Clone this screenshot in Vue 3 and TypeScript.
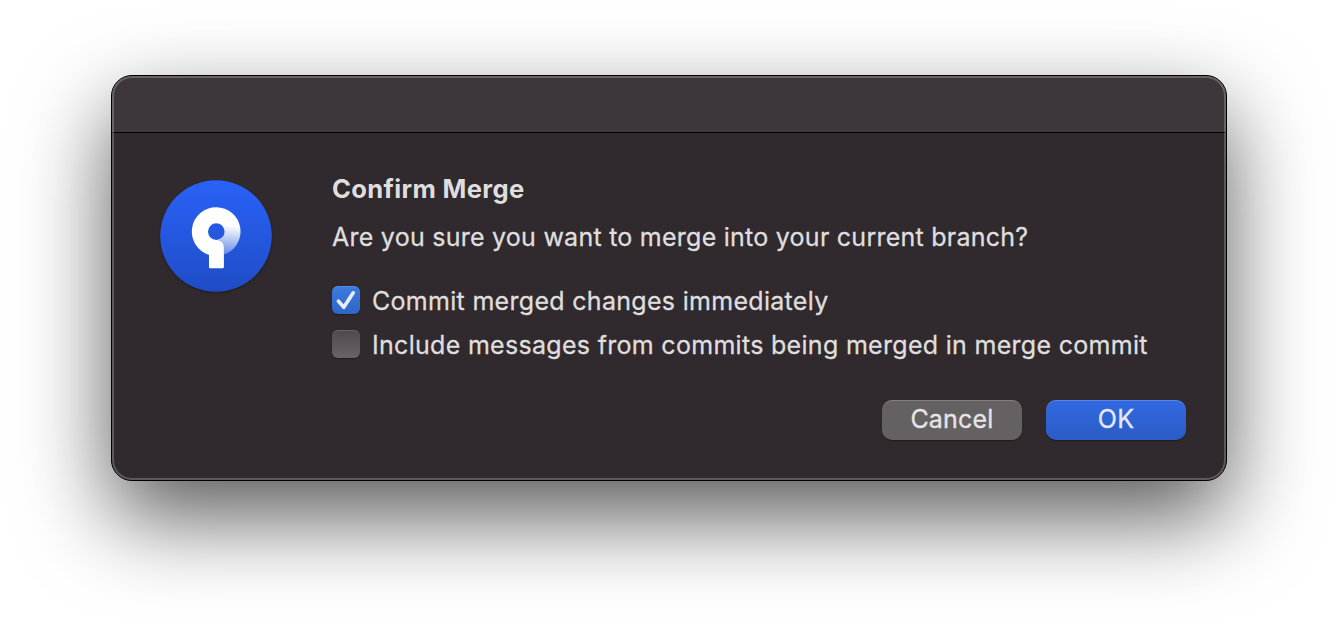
<script setup lang="ts">
import { ref } from 'vue'

interface Option {
  id: string
  label: string
  checked: boolean
}

const options = ref<Option[]>([
  { id: 'commit', label: 'Commit merged changes immediately', checked: true },
  { id: 'include', label: 'Include messages from commits being merged in merge commit', checked: false },
])

function toggle(option: Option): void {
  option.checked = !option.checked
}
</script>

<template>
  <main class="desktop">
    <section class="window" role="dialog" aria-labelledby="dialog-title">
      <header class="titlebar"></header>
      <div class="body">
        <svg class="app-icon" width="120" height="120" viewBox="0 0 120 120" aria-hidden="true">
          <defs>
            <linearGradient id="disc" x1="0" y1="0" x2="0" y2="1">
              <stop offset="0" stop-color="#2962f8" />
              <stop offset="1" stop-color="#204dc6" />
            </linearGradient>
            <linearGradient id="fade" gradientUnits="userSpaceOnUse" x1="72" y1="49" x2="69" y2="79">
              <stop offset="0" stop-color="#fff" />
              <stop offset="1" stop-color="#fff" stop-opacity="0.3" />
            </linearGradient>
          </defs>
          <circle class="disc" cx="60" cy="60" r="55.8" fill="url(#disc)" />
          <path fill="url(#fade)" d="M60 31.2h.3a24.4 24.4 0 0 1 7.4 47.6V71a7 7 0 0 0-7.4-7.2a8.3 8.3 0 0 0 0-16.6H60z" />
          <path fill="#fff" d="M60.3 31.2V47.3a8.3 8.3 0 0 0 0 16.6c4.6 0 7.6 2.7 7.6 7.3V91a1.2 1.2 0 0 1-1.2 1.2H54.2A1.2 1.2 0 0 1 53 91V78.9A24.4 24.4 0 0 1 60.3 31.2z" />
        </svg>
        <div class="content">
          <h1 id="dialog-title">Confirm Merge</h1>
          <p class="question">Are you sure you want to merge into your current branch?</p>
          <div class="options">
            <div
              v-for="option in options"
              :key="option.id"
              class="option"
              role="checkbox"
              :aria-checked="option.checked"
              @click="toggle(option)"
            >
              <span class="box" :class="{ checked: option.checked }">
                <svg v-if="option.checked" width="28" height="28" viewBox="0 0 28 28">
                  <path d="M6.4 15.1l5.4 6.2L21.2 6.8" fill="none" stroke="#e8edfa" stroke-width="3.6" stroke-linecap="round" stroke-linejoin="round" />
                </svg>
              </span>
              <span>{{ option.label }}</span>
            </div>
          </div>
          <footer class="actions">
            <button type="button" class="btn cancel">Cancel</button>
            <button type="button" class="btn ok">OK</button>
          </footer>
        </div>
      </div>
    </section>
  </main>
</template>

<style>
body {
  background: #fff;
  overflow: hidden;
}
</style>

<style scoped>
.desktop {
  box-sizing: border-box;
  width: 1338px;
  height: 628px;
  padding: 75px 111px;
  overflow: hidden;
  background: #fff;
  font-family: Inter, "Liberation Sans", sans-serif;
  color: #dfdedf;
}
.window {
  position: relative;
  box-sizing: border-box;
  width: 1116px;
  height: 406px;
  border: 1px solid #000;
  border-radius: 21px;
  background: #30292d;
  box-shadow: 0 36px 88px rgba(0, 0, 0, 0.65);
}
.window::after {
  content: "";
  position: absolute;
  inset: 0;
  border-radius: 20px;
  box-shadow: inset 0 0 0 2px rgba(255, 255, 255, 0.22);
  pointer-events: none;
}
.titlebar {
  box-sizing: border-box;
  height: 57px;
  border-bottom: 1px solid #000;
  border-radius: 20px 20px 0 0;
  background: #3d373b;
}
.body {
  display: flex;
  padding: 40px 40px 0 44px;
}
.app-icon {
  display: block;
  margin-top: 3px;
  flex: none;
}
.disc {
  filter: drop-shadow(0 1px 1px rgba(0, 0, 0, 0.35));
}
.content {
  flex: 1;
  margin-left: 56px;
}
h1,
p {
  margin: 0;
  font-size: 25px;
  line-height: 32px;
  white-space: nowrap;
}
h1 {
  font-size: 25.6px;
  font-weight: 700;
  letter-spacing: 0.33px;
}
.question {
  margin-top: 16px;
  letter-spacing: 0.25px;
  -webkit-text-stroke: 0.3px currentColor;
}
.options {
  display: flex;
  flex-direction: column;
  gap: 12px;
  margin-top: 32px;
}
.option {
  display: flex;
  align-items: center;
  gap: 12px;
  height: 32px;
  font-size: 25px;
  line-height: 32px;
  letter-spacing: 0.3px;
  white-space: nowrap;
  -webkit-text-stroke: 0.3px currentColor;
}
.box {
  flex: none;
  width: 28px;
  height: 28px;
  margin-top: -2px;
  border-radius: 6px;
  background: linear-gradient(#4f494c, #686366);
  box-shadow: inset 0 1px 0 rgba(255, 255, 255, 0.14), 0 1px 1px rgba(0, 0, 0, 0.3);
}
.box.checked {
  background: linear-gradient(#3c7be0, #2f66c4);
}
.box svg {
  display: block;
}
.actions {
  display: flex;
  justify-content: flex-end;
  gap: 24px;
  margin-top: 39px;
}
.btn {
  width: 140px;
  height: 40px;
  padding: 0 0 2px;
  border: 0;
  border-radius: 10px;
  color: #e6e4e5;
  font: 25px/38px Inter, "Liberation Sans", sans-serif;
  letter-spacing: 0.2px;
  -webkit-text-stroke: 0.3px currentColor;
  box-shadow: inset 0 1px 0 rgba(255, 255, 255, 0.2), 0 1px 1px rgba(0, 0, 0, 0.35);
}
.cancel {
  background: #656062;
}
.ok {
  background: linear-gradient(#3169e2, #2b5cc5);
  color: #e4eafa;
}
</style>
